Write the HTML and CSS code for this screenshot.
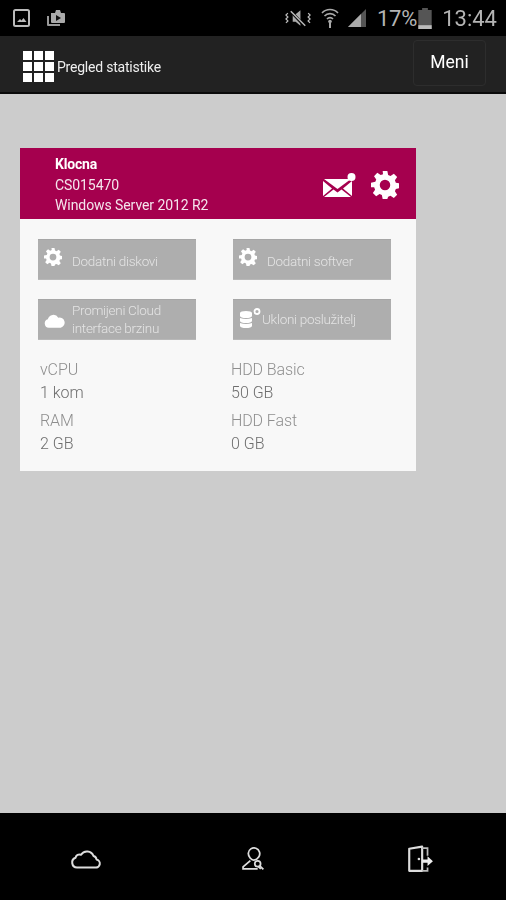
FILE: index.html
```html
<!DOCTYPE html>
<html lang="hr">
<head>
<meta charset="utf-8">
<title>Pregled statistike</title>
<link rel="stylesheet" href="styles.css">
</head>
<body>
<svg class="defs" width="0" height="0" aria-hidden="true">
  <defs>
    <symbol id="gear" viewBox="0 0 24 24">
      <path fill="currentColor" fill-rule="evenodd" d="M10 0h4l.7 3.4 2 .8 2.900-1.900 2.800 2.800-1.900 2.900.8 2 3.400.7v4l-3.400.7-.8 2 1.900 2.900-2.800 2.800-2.900-1.900-2 .8L14 24h-4l-.7-3.400-2-.8-2.900 1.900-2.800-2.800 1.900-2.900-.8-2L0 14v-4l3.700-.7.800-2-1.900-2.900 2.800-2.800 2.900 1.900 2-.8zM12 7.500a4.500 4.500 0 1 0 0 9 4.500 4.500 0 0 0 0-9z"/>
    </symbol>
  </defs>
</svg>
<div class="phone">
  <div class="status">
    <div class="status-left">
      <svg class="ic-pic" viewBox="0 0 18 18"><rect x="1" y="1" width="15" height="16" rx="1.500" fill="none" stroke="#bbb" stroke-width="2"/><path d="M4 13l3-3 1.500 1.500L10.500 9l3 4z" fill="#bbb"/></svg>
      <svg class="ic-play" viewBox="0 0 20 18"><path d="M3 7H1v9a1 1 0 0 0 1 1h12v-2H3z" fill="#999"/><path d="M5 4h4l1-3h4l1 3h3a1 1 0 0 1 1 1v8a1 1 0 0 1-1 1H6a1 1 0 0 1-1-1z" fill="#aaa"/><path d="M10 6l5 3-5 3z" fill="#111"/></svg>
    </div>
    <div class="status-right">
      <svg class="ic-mute" viewBox="0 0 28 18"><path d="M8 5h3l5-4v16l-5-4H8z" fill="#aaa"/><path d="M5 1l15 16" stroke="#000" stroke-width="3"/><path d="M6 2l15 15" stroke="#bbb" stroke-width="1.500"/><path d="M3 4l-2 2 2 2-2 2 2 2-2 2M24 4l2 2-2 2 2 2-2 2 2 2" fill="none" stroke="#bbb" stroke-width="1.300"/></svg>
      <svg class="ic-wifi" viewBox="0 0 18 20"><path d="M1 5a11 11 0 0 1 16 0M3.500 8a7.500 7.500 0 0 1 11 0M6 11a4 4 0 0 1 6 0" fill="none" stroke="#aaa" stroke-width="1.600"/><circle cx="9" cy="13.500" r="1.800" fill="#aaa"/><path d="M8 15h2v5H8z" fill="#aaa"/></svg>
      <svg class="ic-signal" viewBox="0 0 20 18"><path d="M19 0v18H1z" fill="#555"/><path d="M14 5v13H1z" fill="#aaa"/></svg>
      <span class="pct">17%</span>
      <svg class="ic-batt" viewBox="0 0 14 22"><path d="M4 0h6v2h4v20H0V2h4z" fill="#555"/><path d="M0 18h14v4H0z" fill="#bbb"/></svg>
      <span class="clock">13:44</span>
    </div>
  </div>
  <header class="appbar">
    <div class="brand">
      <div class="grid-icon"><i></i><i></i><i></i><i></i><i></i><i></i><i></i><i></i><i></i></div>
      <span class="brand-title">Pregled statistike</span>
    </div>
    <button class="menu-btn">Meni</button>
  </header>
  <main class="content">
    <section class="card">
      <div class="card-head">
        <div class="head-text">
          <div class="server-name">Klocna</div>
          <div>CS015470</div>
          <div>Windows Server 2012 R2</div>
        </div>
        <div class="head-icons">
          <svg class="ic-mail" viewBox="0 0 33 24"><path d="M1 6h27L14.500 16z" fill="#fff"/><path d="M0 8l9 7.500L0 23zM29 8v15l-9-7.500zM1 24l9.500-7.500 4 3 4-3L28 24z" fill="#fff"/><circle cx="28.500" cy="4" r="4" fill="#fff"/></svg>
          <svg class="ic-gear-lg"><use href="#gear"/></svg>
        </div>
      </div>
      <div class="card-body">
        <div class="actions">
          <button class="action"><svg class="ic-gear"><use href="#gear"/></svg><span class="action-label label-low">Dodatni diskovi</span></button>
          <button class="action"><svg class="ic-gear"><use href="#gear"/></svg><span class="action-label label-low">Dodatni softver</span></button>
          <button class="action"><svg class="ic-cloud" viewBox="0 0 22 14"><path d="M5 14a4.500 4.500 0 0 1-1-8.800A6 6 0 0 1 15 3.500 5.300 5.300 0 0 1 17.500 14z" fill="#fff"/></svg><span class="action-label two-line">Promijeni Cloud interface brzinu</span></button>
          <button class="action"><svg class="ic-db" viewBox="0 0 22 20"><path d="M1 5a6 2 0 0 1 12 0v3a6 2 0 0 1-12 0zM1 10a8 2.500 0 0 0 12 0v3a6 2 0 0 1-12 0zM1 15a8 2.500 0 0 0 12 0v3a6 2 0 0 1-12 0z" fill="#fff"/><circle cx="18" cy="3.500" r="2.500" fill="none" stroke="#fff" stroke-width="1.800"/></svg><span class="action-label label-up">Ukloni poslužitelj</span></button>
        </div>
        <div class="specs">
          <div class="spec"><div class="spec-k">vCPU</div><div class="spec-v">1 kom</div></div>
          <div class="spec"><div class="spec-k">HDD Basic</div><div class="spec-v">50 GB</div></div>
          <div class="spec"><div class="spec-k">RAM</div><div class="spec-v">2 GB</div></div>
          <div class="spec"><div class="spec-k">HDD Fast</div><div class="spec-v">0 GB</div></div>
        </div>
      </div>
    </section>
  </main>
  <nav class="bottom">
    <svg class="nav-cloud" viewBox="0 0 32 20"><path d="M7 18.500a5 5 0 0 1-1.500-9.700 4 4 0 0 1 5.500-3A7 7 0 0 1 23.500 7a4 4 0 0 1 3 3.500 4 4 0 0 1-1.500 8z" fill="none" stroke="#ddd" stroke-width="2" stroke-linejoin="round"/></svg>
    <svg class="nav-user" viewBox="0 0 24 24"><path d="M7 7a5.500 5.500 0 1 1 10 3.500c-1 1.500-3 3-5 3s-5-3-5-6.500zM9 14l-7 6v2h14M19 22l-3-3" fill="none" stroke="#ddd" stroke-width="1.700"/><circle cx="16" cy="17" r="2.800" fill="#000" stroke="#ddd" stroke-width="1.700"/><path d="M18 19l3.500 3.500" stroke="#ddd" stroke-width="1.700"/></svg>
    <svg class="nav-exit" viewBox="0 0 24 26"><path d="M2 3.500L14 1.500v22.500H2z" fill="none" stroke="#ddd" stroke-width="2" stroke-linejoin="round"/><path d="M14 3h5v7M19 21v3h-5" fill="none" stroke="#bbb" stroke-width="1.600"/><path d="M14 13.500h5V10.500l5 4.500-5 4.500v-3h-5z" fill="#eee"/><circle cx="11" cy="13" r="1.200" fill="#ddd"/></svg>
  </nav>
</div>
</body>
</html>
```

FILE: styles.css
```css
* { box-sizing: border-box; }
html, body { margin: 0; padding: 0; }
body { font-family: Roboto, "Liberation Sans", sans-serif; background: #cccccc; }
.defs { position: absolute; }
.phone { width: 506px; height: 900px; display: flex; flex-direction: column; filter: blur(0.4px); }

.status { height: 36px; flex: none; background: #000; display: flex; justify-content: space-between; align-items: center; padding: 0 9px 0 13px; color: #b4b4b4; }
.status-left { display: flex; align-items: center; gap: 15px; }
.ic-pic { width: 18px; height: 18px; }
.ic-play { width: 20px; height: 18px; }
.status-right { display: flex; align-items: center; }
.ic-mute { width: 27px; height: 18px; margin-right: 9px; }
.ic-wifi { width: 18px; height: 20px; margin-right: 8px; }
.ic-signal { width: 20px; height: 18px; margin-right: 10px; }
.pct { font-size: 22px; letter-spacing: -0.2px; margin-right: 1px; }
.ic-batt { width: 14px; height: 21px; margin-right: 10px; }
.clock { font-size: 22px; }

.appbar { height: 58px; flex: none; background: #222; border-bottom: 2px solid #0a0a0a; display: flex; justify-content: space-between; align-items: center; padding: 0 20px 0 23px; }
.brand { display: flex; align-items: center; gap: 3px; margin-top: 5px; }
.grid-icon { width: 31px; height: 31px; display: grid; grid-template-columns: repeat(3, 9px); grid-auto-rows: 9px; gap: 2px; }
.grid-icon i { background: #fff; }
.brand-title { color: #eee; font-size: 14px; letter-spacing: -0.22px; }
.menu-btn { width: 73px; height: 46px; margin-top: -3px; background: #222; border: 1px solid #2d2d2d; border-radius: 4px; color: #fff; font: 400 17.500px Roboto, "Liberation Sans", sans-serif; padding: 0 0 2px; }

.content { flex: 1; padding: 54px 90px 0 20px; }
.card { background: #f8f8f8; height: 323px; }
.card-head { height: 71px; background: #a5004e; color: #f4e4ec; display: flex; justify-content: space-between; padding: 6px 17px 0 35px; font-size: 14px; line-height: 20.500px; letter-spacing: -0.08px; }
.server-name { font-weight: 700; color: #fff; letter-spacing: -0.2px; }
.head-icons { display: flex; align-items: center; gap: 15px; margin-top: -4px; }
.ic-mail { width: 33px; height: 24px; }
.ic-gear-lg { width: 28px; height: 28px; color: #fff; }

.card-body { padding: 20px 25px 0 18px; }
.actions { display: grid; grid-template-columns: 158px 158px; column-gap: 37px; row-gap: 19px; }
.action { height: 41px; background: #aeaeae; border: 0; border-bottom: 1px solid #b8b8b8; border-top: 1px solid #a6a6a6; display: flex; align-items: center; padding: 0 0 0 6px; color: #e4e4e4; font: 300 13.500px/18px Roboto, "Liberation Sans", sans-serif; text-align: left; }
.action-label { letter-spacing: -0.3px; }
.label-low { margin-top: 2px; }
.label-up { margin-top: -2px; }
.ic-gear { width: 18px; height: 18px; color: #fff; margin: -5px 10px 0 0; flex: none; }
.ic-cloud { width: 21px; height: 14px; margin: 2px 7px 0 0; flex: none; }
.two-line { width: 110px; margin-top: -2px; }
.ic-db { width: 22px; height: 20px; margin: -4px 1px 0 0; flex: none; }

.specs { display: grid; grid-template-columns: 191px 1fr; margin: 19px 0 0 2px; }
.spec { height: 51px; font-size: 16px; font-weight: 300; line-height: 22.500px; }
.spec-k { color: #8e8e8e; letter-spacing: -0.1px; }
.spec-v { color: #6e6e6e; }

.bottom { height: 87px; flex: none; background: #000; display: flex; align-items: center; padding: 4px 0 0 70px; }
.nav-cloud { width: 32px; height: 20px; margin-right: 139px; }
.nav-user { width: 25px; height: 25px; margin-right: 141px; }
.nav-exit { width: 26px; height: 28px; }
```
